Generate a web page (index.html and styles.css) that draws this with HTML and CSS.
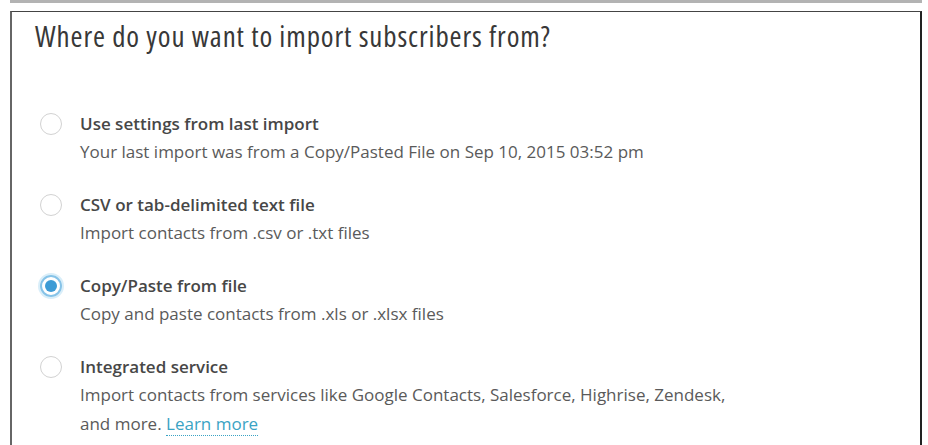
FILE: index.html
```html
<!DOCTYPE html>
<html lang="en">
<head>
<meta charset="utf-8">
<title>Import subscribers</title>
<link rel="stylesheet" href="styles.css">
</head>
<body>
<div class="topbar"></div>
<section class="panel">
  <h1 class="title">Where do you want to import subscribers from?</h1>
  <ul class="options">
    <li class="option">
      <span class="radio"></span>
      <div class="text">
        <div class="label">Use settings from last import</div>
        <div class="desc">Your last import was from a Copy/Pasted File on Sep 10, 2015 03:52 pm</div>
      </div>
    </li>
    <li class="option">
      <span class="radio"></span>
      <div class="text">
        <div class="label">CSV or tab-delimited text file</div>
        <div class="desc">Import contacts from .csv or .txt files</div>
      </div>
    </li>
    <li class="option">
      <span class="radio checked"></span>
      <div class="text">
        <div class="label">Copy/Paste from file</div>
        <div class="desc">Copy and paste contacts from .xls or .xlsx files</div>
      </div>
    </li>
    <li class="option">
      <span class="radio"></span>
      <div class="text">
        <div class="label">Integrated service</div>
        <div class="desc">Import contacts from services like Google Contacts, Salesforce, Highrise, Zendesk,<br>and more. <a class="link" href="#">Learn more</a></div>
      </div>
    </li>
  </ul>
</section>
</body>
</html>
```
FILE: styles.css
```css
html, body {
  margin: 0;
  padding: 0;
  background: #fff;
  height: 100%;
  overflow: hidden;
}

body {
  font-family: "Open Sans", "Noto Sans", sans-serif;
  color: #444;
}

.topbar {
  height: 3px;
  margin: 0 6px 0 10px;
  background: #b3b3b3;
}

.panel {
  margin: 8px 6px 0 10px;
  border-top: 1px solid #444;
  border-left: 2px solid #666;
  border-right: 2px solid #222;
  min-height: 440px;
  padding: 4px 0 0 23px;
  box-sizing: border-box;
}

.title {
  margin: 0;
  font-size: 29px;
  font-weight: 400;
  font-stretch: 75%;
  line-height: 40px;
  color: #383838;
  letter-spacing: 0.9px;
}

.options {
  list-style: none;
  margin: 54px 0 0;
  padding: 0;
}

.option {
  display: flex;
  align-items: flex-start;
  margin-bottom: 25px;
}

.radio {
  flex: none;
  width: 22px;
  height: 22px;
  border: 1.5px solid #d2d2d2;
  border-radius: 50%;
  margin: 3px 0 0 5px;
  box-sizing: border-box;
  position: relative;
}

.radio.checked {
  border: 2px solid #86c3e8;
  box-shadow: 0 0 0 2px #d9eef9;
}

.radio.checked::after {
  content: "";
  position: absolute;
  left: 3px;
  top: 3px;
  width: 12px;
  height: 12px;
  border-radius: 50%;
  background: #3d9bd5;
}

.text {
  margin-left: 18px;
}

.label {
  font-size: 17px;
  font-weight: 600;
  line-height: 27px;
  color: #474747;
}

.desc {
  font-size: 17px;
  line-height: 29px;
  color: #5a5a5a;
}

.link {
  color: #3aa3c4;
  text-decoration: none;
  border-bottom: 1px dotted #3aa3c4;
}
```
